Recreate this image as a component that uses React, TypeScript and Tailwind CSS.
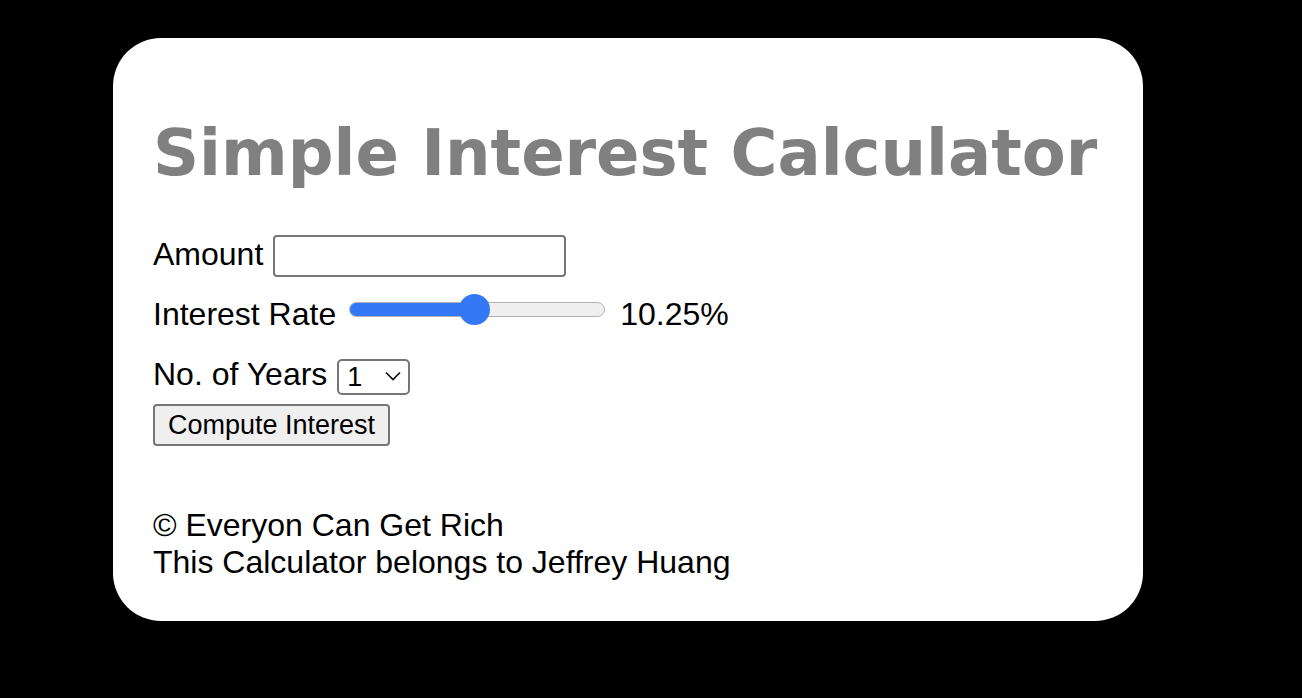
import { useState } from 'react';

export default function App() {
  const [amount, setAmount] = useState('');
  const [rate, setRate] = useState(10.25);
  const [years, setYears] = useState('1');

  const pct = ((rate - 1) / (20 - 1)) * 100;

  return (
    <div className="min-h-screen h-[698px] bg-black pt-[38px] pl-[113px] font-['Liberation_Sans',Arial,sans-serif] text-black">
      <div className="w-[1030px] h-[583px] bg-white rounded-[48px] pt-[76px] pl-[40px] flex flex-col">
        <h1 className="font-['Verdana','DejaVu_Sans',sans-serif] font-bold text-[64px] leading-[78px] text-[#808080] m-0">
          Simple Interest Calculator
        </h1>

        <div className="mt-[43px] flex items-center h-[42px] text-[32px] leading-[37px]">
          <label htmlFor="amount" className="mb-[4px]">Amount</label>
          <input
            id="amount"
            type="number"
            value={amount}
            onChange={(e) => setAmount(e.target.value)}
            className="ml-[10px] w-[293px] h-[42px] border-2 border-[#767676] rounded-[4px] bg-white px-1 text-[26px] outline-none"
          />
        </div>

        <div className="mt-[19px] flex items-center h-[37px] text-[32px] leading-[37px]">
          <span>Interest Rate</span>
          <input
            type="range"
            min={1}
            max={20}
            step={0.25}
            value={rate}
            onChange={(e) => setRate(parseFloat(e.target.value))}
            style={{
              background: `linear-gradient(to right, #3478f6 0%, #3478f6 ${pct}%, #efefef ${pct}%, #efefef 100%)`,
            }}
            className="ml-[13px] mb-[11px] w-[256px] h-[15px] appearance-none rounded-full border border-[#b2b2b2] cursor-pointer [&::-webkit-slider-thumb]:appearance-none [&::-webkit-slider-thumb]:w-[31px] [&::-webkit-slider-thumb]:h-[31px] [&::-webkit-slider-thumb]:rounded-full [&::-webkit-slider-thumb]:bg-[#3478f6] [&::-webkit-slider-thumb]:border-0"
          />
          <span className="ml-[15px]">{rate.toFixed(2)}%</span>
        </div>

        <div className="mt-[25px] flex items-center h-[36px] text-[32px] leading-[37px]">
          <span className="mb-[4px]">No. of Years</span>
          <div className="relative ml-[10px]">
            <select
              value={years}
              onChange={(e) => setYears(e.target.value)}
              className="appearance-none w-[73px] h-[36px] border-2 border-[#767676] rounded-[5px] bg-white pl-[8px] text-[27px] leading-[30px] outline-none"
            >
              {Array.from({ length: 10 }, (_, i) => (
                <option key={i + 1} value={String(i + 1)}>
                  {i + 1}
                </option>
              ))}
            </select>
            <svg
              className="absolute right-[9px] top-[14px] pointer-events-none"
              width="16"
              height="10"
              viewBox="0 0 16 10"
              fill="none"
            >
              <path d="M1 1.5l7 7 7-7" stroke="#111" strokeWidth="1.7" />
            </svg>
          </div>
        </div>

        <div className="mt-[10px]">
          <button
            type="button"
            className="w-[237px] h-[42px] border-2 border-[#767676] rounded-[4px] bg-[#efefef] text-[27px] leading-[30px] text-black"
          >
            Compute Interest
          </button>
        </div>

        <div className="mt-[61px] text-[32px] leading-[37px]">
          <div>© Everyon Can Get Rich</div>
          <div>This Calculator belongs to Jeffrey Huang</div>
        </div>
      </div>
    </div>
  );
}
